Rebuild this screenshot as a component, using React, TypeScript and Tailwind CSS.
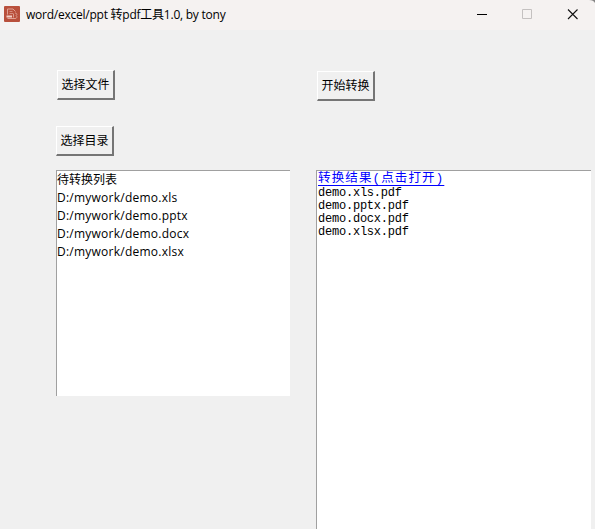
import React from "react";

const ui = "font-['Open_Sans','Noto_Sans_CJK_SC',sans-serif]";

function ToolButton({ label, className = "" }: { label: string; className?: string }) {
  return (
    <button
      className={`flex h-[30px] w-[58px] items-center justify-center whitespace-nowrap border-t border-l border-r-2 border-b-2 border-t-white border-l-white border-r-[#757575] border-b-[#757575] bg-[#f0f0f0] p-0 text-[12px] leading-[18px] text-black ${className}`}
    >
      {label}
    </button>
  );
}

function AppIcon() {
  return (
    <svg width="16" height="16" viewBox="0 0 16 16" fill="none">
      <rect width="16" height="16" rx="1" fill="#b9503c" />
      <path d="M3.5 8.500V3H9l2.500 2.500M3.500 12.500h8" stroke="#e0a093" />
      <path d="M5.500 5.500h3M5.500 7.500h4" stroke="#d58c7d" />
      <rect x="2.500" y="9.500" width="5.500" height="2" fill="#f2cfc7" />
      <path d="M11 7c2 0 2.500 1.500 1.200 2.500 1.300 1 .800 3-1.200 3M9.500 8v3.500" stroke="#dc9c8e" />
    </svg>
  );
}

const pending = ["D:/mywork/demo.xls", "D:/mywork/demo.pptx", "D:/mywork/demo.docx", "D:/mywork/demo.xlsx"];
const results = ["demo.xls.pdf", "demo.pptx.pdf", "demo.docx.pdf", "demo.xlsx.pdf"];

export default function App() {
  return (
    <div className={`flex h-[529px] w-[595px] flex-col overflow-hidden bg-[#f0f0f0] text-black ${ui}`}>
      <header className="flex h-[30px] shrink-0 items-center bg-[#f5f2f1] pl-1">
        <div className="-mt-[2px]"><AppIcon /></div>
        <h1 className="ml-[6px] whitespace-nowrap text-[12px] leading-[18px] tracking-[-0.240px]">word/excel/ppt 转pdf工具1.0, by tony</h1>
        <div className="ml-auto flex items-center">
          <svg width="118" height="30" viewBox="0 0 118 30" fill="none">
            <path d="M0 14.500h10" stroke="#000" />
            <path d="M45.500 9.500h9v9h-9z" stroke="#c4c1c0" />
            <path d="M91 9.500l9.500 9.500M100.500 9.500L91 19" stroke="#111" strokeWidth="1.1" />
            <path d="M112 0h6v3c-1-2-3-3-6-3z" fill="#858585" />
          </svg>
        </div>
      </header>
      <main className="flex min-h-0 flex-1 pl-14">
        <section className="w-[234px]">
          <ToolButton label="选择文件" className="mt-10 ml-px" />
          <ToolButton label="选择目录" className="mt-[26px]" />
          <ul className="mt-[14px] h-[226px] border-t border-l border-[#a0a0a0] bg-white text-[12px] leading-[18px]">
            <li>待转换列表</li>
            {pending.map((p) => <li key={p} className="whitespace-nowrap tracking-[0.240px]">{p}</li>)}
          </ul>
        </section>
        <section className="ml-[26px] flex w-[275px] flex-col">
          <ToolButton label="开始转换" className="mt-[41px] ml-px" />
          <div className="mt-[69px] flex-1 border-t border-l border-[#a0a0a0] bg-white pt-px pl-px font-['Liberation_Mono','Noto_Sans_CJK_SC',monospace] text-[12px] leading-[13px] tracking-[-0.220px]">
            <a className="block h-[14px] w-[126px] whitespace-nowrap pt-px text-[12.500px] leading-[12px] tracking-[1.130px] text-[#0000ff] underline decoration-[#0000ff] decoration-1 underline-offset-[3px] [text-decoration-skip-ink:none]">转换结果(点击打开)</a>
            <div className="pt-px">
              {results.map((r) => <p key={r}>{r}</p>)}
            </div>
          </div>
        </section>
      </main>
    </div>
  );
}
